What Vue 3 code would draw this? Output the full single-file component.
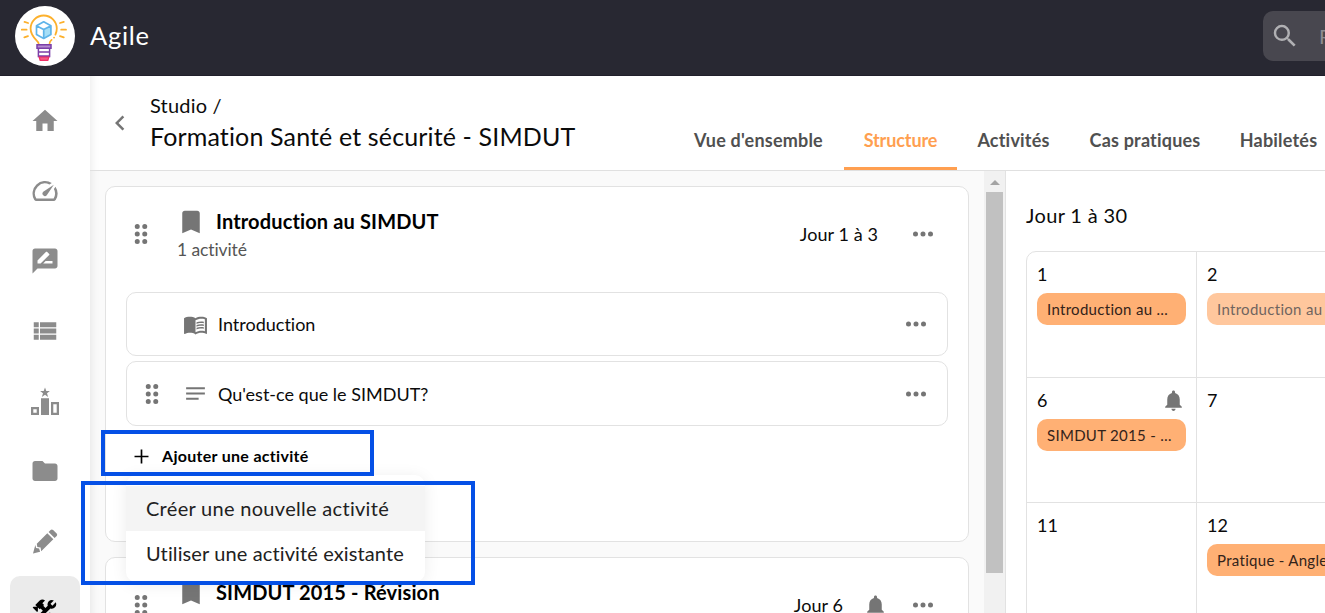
<template>
  <div class="app">
    <header class="topbar">
      <div class="brand">
        <svg class="logo" viewBox="0 0 60 60">
          <circle cx="30" cy="30" r="30" fill="#fff" />
          <g fill="none" stroke="#fcb02c" stroke-width="1.8" stroke-linecap="round">
            <path d="M23.6 37.5C23.6 34.8 15.6 31.5 15.6 22.6A13.1 13.1 0 0 1 41.8 22.6C41.8 25 41.2 27 40.4 28.6" />
            <path d="M34.6 37.2C34.7 35.6 35.4 34.9 36.6 33.9M39 31.6h.1" />
            <path d="M6.8 23.7h4.8M9.5 15.9l3.6 1.1M9.3 31.3l3.7-1.2M46.2 23.7H51M45 17l3.8-1.2M45 30.1l3.8 1.2" />
          </g>
          <path d="M28.7 24v8.5l7.4-4V20z" fill="#a5def7" />
          <path
            d="M28.7 15.8l7.2 3.9v8.7l-7.2 4-7.2-4v-8.7zM21.8 19.9l6.9 3.7 6.9-3.7M28.7 23.6v8.2"
            fill="none"
            stroke="#5fb4e9"
            stroke-width="1.7"
            stroke-linejoin="round"
          />
          <path d="M22 38.8h14v3.4H22z" fill="#b58bd0" stroke="#7b3fa8" stroke-width="1.5" />
          <path d="M23.4 42.5v8h11.2v-8M23.4 46h11.2M23.4 50h11.2" fill="none" stroke="#7b3fa8" stroke-width="1.5" />
          <path d="M24.2 51.2h9.6l-1 3.2h-7.6z" fill="#f55a85" stroke="#ef2f66" stroke-width="1.3" />
        </svg>
        <span class="brand-name">Agile</span>
      </div>
      <div class="search">
        <svg class="icon" viewBox="0 0 24 24"><path :d="icons.search" /></svg>
        <span>Rechercher</span>
      </div>
    </header>

    <div class="body">
      <nav class="sidebar">
        <a v-for="item in navItems" :key="item.name" class="nav-item" :class="{ active: item.active }">
          <svg class="icon" :viewBox="item.box || '0 0 24 24'"><path :d="item.path" /></svg>
        </a>
      </nav>

      <main class="main">
        <div class="page-header">
          <svg class="icon back" viewBox="0 0 24 24"><path :d="icons.chevron" /></svg>
          <div class="titles">
            <div class="crumb">Studio /</div>
            <h1>Formation Santé et sécurité - SIMDUT</h1>
          </div>
          <div class="tabs">
            <div
              v-for="tab in tabs"
              :key="tab.label"
              class="tab"
              :class="{ selected: tab.label === currentTab }"
              :style="{ width: tab.width + 'px' }"
            >
              {{ tab.label }}
            </div>
          </div>
        </div>

        <div class="content">
          <section class="modules">
            <article v-for="mod in modules" :key="mod.title" class="card">
              <div class="card-head">
                <svg class="icon" viewBox="0 0 24 24"><path :d="icons.drag" /></svg>
                <div class="card-title">
                  <div class="title-line">
                    <svg class="icon" viewBox="0 0 24 24"><path :d="icons.bookmark" /></svg>
                    <h2>{{ mod.title }}</h2>
                  </div>
                  <div class="count">{{ mod.count }}</div>
                </div>
                <span class="days">{{ mod.days }}</span>
                <svg v-if="mod.bell" class="icon small bell" viewBox="0 0 24 24"><path :d="icons.bell" /></svg>
                <svg class="icon more" viewBox="0 0 24 24"><path :d="icons.more" /></svg>
              </div>
              <div v-for="act in mod.activities" :key="act.label" class="activity">
                <svg class="icon" viewBox="0 0 24 24"><path v-if="act.draggable" :d="icons.drag" /></svg>
                <svg class="icon small kind" viewBox="0 0 24 24"><path :d="icons[act.icon]" /></svg>
                <span class="activity-label">{{ act.label }}</span>
                <svg class="icon more" viewBox="0 0 24 24"><path :d="icons.more" /></svg>
              </div>
              <div v-if="mod.activities.length" class="add">
                <svg class="icon small" viewBox="0 0 24 24"><path :d="icons.plus" /></svg>
                <span class="add-label">Ajouter une activité</span>
                <div v-if="menuOpen" class="menu">
                  <div
                    v-for="(option, i) in menuOptions"
                    :key="option"
                    class="option"
                    :class="{ hover: i === 0 }"
                  >
                    {{ option }}
                  </div>
                </div>
              </div>
            </article>
          </section>

          <div class="scrollbar">
            <div class="arrow"></div>
            <div class="thumb"></div>
          </div>

          <section class="calendar">
            <h3>Jour 1 à 30</h3>
            <div class="grid">
              <div v-for="day in days" :key="day.n" class="cell">
                <div class="cell-head">
                  <span>{{ day.n }}</span>
                  <svg v-if="day.bell" class="icon small" viewBox="0 0 24 24"><path :d="icons.bell" /></svg>
                </div>
                <div v-if="day.event" class="event" :class="{ faded: day.faded }">{{ day.event }}</div>
              </div>
            </div>
          </section>
        </div>
      </main>
    </div>

    <!-- highlight frames laid over the page -->
    <div class="frame frame-add"></div>
    <div class="frame frame-menu"></div>
  </div>
</template>

<script setup>
import { ref } from "vue";

const icons = {
  search:
    "M15.5 14h-.79l-.28-.27A6.471 6.471 0 0 0 16 9.5 6.5 6.5 0 1 0 9.5 16c1.61 0 3.09-.59 4.23-1.57l.27.28v.79l5 4.99L20.49 19l-4.99-5zm-6 0C7.01 14 5 11.99 5 9.5S7.01 5 9.5 5 14 7.01 14 9.5 11.99 14 9.5 14z",
  chevron: "M15.41 7.41L14 6l-6 6 6 6 1.41-1.41L10.83 12z",
  drag: "M7 6a2 2 0 1 0 4 0a2 2 0 1 0-4 0M13 6a2 2 0 1 0 4 0a2 2 0 1 0-4 0M7 12a2 2 0 1 0 4 0a2 2 0 1 0-4 0M13 12a2 2 0 1 0 4 0a2 2 0 1 0-4 0M7 18a2 2 0 1 0 4 0a2 2 0 1 0-4 0M13 18a2 2 0 1 0 4 0a2 2 0 1 0-4 0",
  bookmark: "M17 3H7c-1.1 0-2 .9-2 2v16l7-3 7 3V5c0-1.1-.9-2-2-2z",
  more: "M4 12a2 2 0 1 0 4 0a2 2 0 1 0-4 0M10 12a2 2 0 1 0 4 0a2 2 0 1 0-4 0M16 12a2 2 0 1 0 4 0a2 2 0 1 0-4 0",
  bell: "M12 22c1.1 0 2-.9 2-2h-4c0 1.1.89 2 2 2zm6-6v-5c0-3.07-1.64-5.64-4.5-6.32V4c0-.83-.67-1.5-1.5-1.5s-1.5.67-1.5 1.5v.68C7.63 5.36 6 7.92 6 11v5l-2 2v1h16v-1l-2-2z",
  book: "M21 5c-1.11-.35-2.33-.5-3.5-.5-1.95 0-4.05.4-5.5 1.5-1.45-1.1-3.55-1.5-5.5-1.5S2.45 4.9 1 6v14.65c0 .25.25.5.5.5.1 0 .15-.05.25-.05C3.1 20.45 5.05 20 6.5 20c1.95 0 4.05.4 5.5 1.5 1.35-.85 3.8-1.5 5.5-1.5 1.65 0 3.35.3 4.75 1.05.1.05.15.05.25.05.25 0 .5-.25.5-.5V6c-.6-.45-1.25-.75-2-1zm0 13.5c-1.1-.35-2.3-.5-3.5-.5-1.7 0-4.15.65-5.5 1.5V8c1.35-.85 3.8-1.5 5.5-1.5 1.2 0 2.4.15 3.5.5v11.5z M17.5 10.5c.88 0 1.73.09 2.5.26V9.24c-.79-.15-1.64-.24-2.5-.24-1.7 0-3.24.29-4.5.83v1.66c1.13-.64 2.7-.99 4.5-.99zM13 12.49v1.66c1.13-.64 2.7-.99 4.5-.99.88 0 1.73.09 2.5.26V11.9c-.79-.15-1.64-.24-2.5-.24-1.7 0-3.24.3-4.5.83zm4.5 1.84c-1.7 0-3.24.29-4.5.83v1.66c1.13-.64 2.7-.99 4.5-.99.88 0 1.73.09 2.5.26v-1.52c-.79-.16-1.64-.24-2.5-.24z",
  notes: "M21 11H3v2h18zM3 16h12v2H3zM21 6H3v2h18z",
  plus: "M18.7 12.8h-5.9v5.9h-1.6v-5.9H5.3v-1.6h5.9V5.3h1.6v5.9h5.9z",
};

const navItems = [
  { name: "home", path: "M10 20v-6h4v6h5v-8h3L12 3 2 12h3v8z" },
  {
    name: "dashboard",
    path: "M20.38 8.57l-1.23 1.85a8 8 0 0 1-.22 7.58H5.07A8 8 0 0 1 15.58 6.85l1.85-1.23A10 10 0 0 0 3.35 19a2 2 0 0 0 1.72 1h13.85a2 2 0 0 0 1.74-1 10 10 0 0 0-.27-10.44zM10.59 15.41a2 2 0 0 0 2.83 0l5.66-8.49-8.49 5.66a2 2 0 0 0 0 2.83z",
  },
  {
    name: "review",
    path: "M20 2H4c-1.1 0-1.99.9-1.99 2L2 22l4-4h14c1.1 0 2-.9 2-2V4c0-1.1-.9-2-2-2zM6 14v-2.47l6.88-6.88c.2-.2.51-.2.71 0l1.77 1.77c.2.2.2.51 0 .71L8.47 14H6zm12 0h-7.5l2-2H18v2z",
  },
  {
    name: "list",
    path: "M3 14h4v-4H3v4zm0 5h4v-4H3v4zM3 9h4V5H3v4zm5 5h13v-4H8v4zm0 5h13v-4H8v4zM8 5v4h13V5H8z",
  },
  {
    name: "ranking",
    box: "0 0 30 30",
    path: "M15 1.5l1.3 3.6h3.6l-2.9 2.2 1.1 3.6-3.1-2.1-3.1 2.1 1.1-3.6-2.9-2.2h3.6zM11 12.3h8V29h-8zM1 21v8h8v-8zM3.3 23.3h3.4v3.4H3.3v-3.4zM21 16v13h8V16zM23.3 18.3h3.4v8.4h-3.4v-8.4z",
  },
  {
    name: "folder",
    path: "M10 4H4c-1.1 0-1.99.9-1.99 2L2 18c0 1.1.9 2 2 2h16c1.1 0 2-.9 2-2V8c0-1.1-.9-2-2-2h-8l-2-2z",
  },
  {
    name: "edit",
    box: "0 0 30 30",
    path: "M17.3 7.3l6 6-12.1 11.9-.6-3.8-3.3-.5-.5-3.1zM5.3 19l.8 3 3 .6 1 3.1-7.1 1.8zM18.6 6l2-2q1.2-1.1 2.5 0l3.6 3.6q1 1.2 0 2.3L24.6 12z",
  },
  {
    name: "tools",
    active: true,
    path: "M13.78 15.3L19.78 21.3L21.89 19.14L15.89 13.14L13.78 15.3M17.5 10.1C17.11 10.1 16.69 10.05 16.36 9.91L4.97 21.25L2.86 19.14L10.27 11.74L8.5 9.96L7.78 10.66L6.33 9.25V12.11L5.63 12.81L2.11 9.25L2.81 8.55H5.62L4.22 7.14L7.78 3.58C8.95 2.41 10.83 2.41 12 3.58L9.89 5.74L11.3 7.14L10.59 7.85L12.38 9.63L14.2 7.75C14.06 7.42 14 7 14 6.63C14 4.66 15.56 3.11 17.5 3.11C18.09 3.11 18.61 3.25 19.08 3.53L16.41 6.2L17.91 7.7L20.58 5.03C20.86 5.5 21 6 21 6.63C21 8.55 19.45 10.1 17.5 10.1Z",
  },
];

const tabs = [
  { label: "Vue d'ensemble", width: 171 },
  { label: "Structure", width: 113 },
  { label: "Activités", width: 113 },
  { label: "Cas pratiques", width: 150 },
  { label: "Habiletés", width: 117 },
];
const currentTab = ref("Structure");

const modules = [
  {
    title: "Introduction au SIMDUT",
    count: "1 activité",
    days: "Jour 1 à 3",
    activities: [
      { label: "Introduction", icon: "book", draggable: false },
      { label: "Qu'est-ce que le SIMDUT?", icon: "notes", draggable: true },
    ],
  },
  {
    title: "SIMDUT 2015 - Révision",
    count: "",
    days: "Jour 6",
    bell: true,
    activities: [],
  },
];

const menuOpen = ref(true);
const menuOptions = ["Créer une nouvelle activité", "Utiliser une activité existante"];

const days = [
  { n: 1, event: "Introduction au SIMDUT" },
  { n: 2, event: "Introduction au SIMDUT", faded: true },
  { n: 6, event: "SIMDUT 2015 - Révision", bell: true },
  { n: 7 },
  { n: 11 },
  { n: 12, event: "Pratique - Angles morts" },
];
</script>

<style>
body {
  margin: 0;
  overflow: hidden;
}
</style>

<style scoped>
.app {
  position: relative;
  width: 100vw;
  height: 100vh;
  overflow: hidden;
  display: flex;
  flex-direction: column;
  font-family: Lato, "Open Sans", sans-serif;
  font-variant-ligatures: none;
  color: #0b0b0b;
  background: #fff;
}
h1,
h2,
h3 {
  margin: 0;
  font-weight: 400;
}
.icon {
  width: 30px;
  height: 30px;
  flex: none;
  display: block;
  fill: #757575;
}
.icon.small {
  width: 25px;
  height: 25px;
}

/* top bar */
.topbar {
  flex: none;
  height: 76px;
  box-sizing: border-box;
  padding: 0 0 4px 15px;
  display: flex;
  align-items: center;
  justify-content: space-between;
  background: #282832;
  border-bottom: 1px solid #201f2b;
}
.brand {
  display: flex;
  align-items: center;
  gap: 15px;
}
.logo {
  width: 60px;
  height: 60px;
}
.brand-name {
  padding-bottom: 2px;
  color: #fff;
  font-size: 25.5px;
  letter-spacing: 0.7px;
}
.search {
  width: 62px;
  height: 50px;
  box-sizing: border-box;
  padding-left: 7px;
  display: flex;
  align-items: center;
  gap: 19px;
  overflow: hidden;
  border-radius: 10px 0 0 10px;
  background: #48474f;
  color: #8d8c92;
  font-size: 20px;
}
.search .icon {
  fill: #b0b0b3;
}

/* sidebar */
.body {
  flex: 1;
  min-height: 0;
  display: flex;
}
.sidebar {
  flex: none;
  width: 90px;
  box-sizing: border-box;
  padding: 10px;
  overflow: hidden;
}
.nav-item {
  height: 70px;
  display: flex;
  align-items: center;
  justify-content: center;
  border-radius: 10px;
}
.nav-item .icon {
  fill: #8c8c8c;
}
.nav-item.active {
  background: #ebebeb;
}
.nav-item.active .icon {
  fill: #000;
}

/* page header */
.main {
  flex: 1;
  min-width: 0;
  display: flex;
  flex-direction: column;
  box-shadow: inset 11px 0 10px -10px rgba(0, 0, 0, 0.09);
}
.page-header {
  flex: none;
  height: 95px;
  box-sizing: border-box;
  padding-left: 15px;
  display: flex;
  border-bottom: 1px solid #e0e0e0;
}
.back {
  margin-top: 32px;
}
.titles {
  width: 523px;
  flex: none;
  margin: 15px 0 0 15px;
}
.crumb {
  font-size: 20px;
  line-height: 28px;
  letter-spacing: 0.2px;
}
h1 {
  font-size: 25px;
  line-height: 35px;
  letter-spacing: 0.14px;
  white-space: nowrap;
}
.tabs {
  display: flex;
  align-items: flex-end;
}
.tab {
  flex: none;
  height: 60px;
  box-sizing: border-box;
  line-height: 60px;
  text-align: center;
  font-size: 18px;
  font-weight: 700;
  letter-spacing: 0.2px;
  color: #505050;
  white-space: nowrap;
}
.tab.selected {
  letter-spacing: -0.1px;
  color: #ff9f50;
  border-bottom: 3px solid #ff9f50;
}

/* modules */
.content {
  flex: 1;
  min-height: 0;
  display: flex;
}
.modules {
  width: 894px;
  flex: none;
  box-sizing: border-box;
  padding: 15px 15px 0;
  overflow: hidden;
  background: rgba(0, 0, 0, 0.02);
}
.card {
  height: 356px;
  box-sizing: border-box;
  margin-bottom: 15px;
  padding: 0 20px;
  border: 1px solid #e2e2e2;
  border-radius: 10px;
  background: #fff;
}
.card-head {
  height: 94px;
  margin-bottom: 11px;
  display: flex;
  align-items: center;
}
.card-title {
  margin-left: 20px;
  height: 52px;
  flex: 1;
}
.title-line {
  display: flex;
  align-items: center;
  gap: 10px;
  height: 28px;
}
h2 {
  padding-bottom: 2px;
  font-size: 20px;
  font-weight: 700;
  letter-spacing: 0.14px;
  color: #000;
}
.count {
  padding-left: 1px;
  font-size: 17.5px;
  line-height: 28px;
  letter-spacing: -0.1px;
  color: #555;
}
.days {
  font-size: 18px;
  letter-spacing: 0.08px;
}
.bell {
  margin-left: 20px;
}
.card-head .more {
  margin: 0 10px 0 30px;
}
.card-head .bell + .more {
  margin-left: 20px;
}
.activity {
  height: 64px;
  box-sizing: border-box;
  margin-bottom: 5px;
  padding: 0 16px 0 10px;
  display: flex;
  align-items: center;
  border: 1px solid #e2e2e2;
  border-radius: 10px;
}
.activity + .activity {
  height: 65px;
  margin-bottom: 0;
}
.kind {
  margin-left: 16px;
}
.activity-label {
  flex: 1;
  margin-left: 10px;
  font-size: 18px;
}

/* add button and its menu */
.add {
  position: relative;
  height: 60px;
  padding-left: 3px;
  display: flex;
  align-items: center;
  gap: 8px;
  font-size: 16px;
  font-weight: 700;
  letter-spacing: 0.3px;
  color: #000;
}
.add-label {
  padding-bottom: 2px;
}
.add .icon {
  fill: #000;
}
.menu {
  position: absolute;
  z-index: 2;
  left: 0;
  top: 49px;
  width: 299px;
  height: 107px;
  box-sizing: border-box;
  padding-top: 11px;
  border-radius: 10px;
  background: #fff;
  box-shadow: 0 2px 16px rgba(0, 0, 0, 0.08);
}
.option {
  height: 45px;
  box-sizing: border-box;
  padding: 0 0 1px 20px;
  display: flex;
  align-items: center;
  font-size: 20px;
  font-weight: 400;
  letter-spacing: 0.12px;
  color: #212121;
  white-space: nowrap;
}
.option.hover {
  letter-spacing: 0.3px;
  background: #f4f4f4;
}

/* fixed scrollbar */
.scrollbar {
  flex: none;
  width: 21px;
  display: flex;
  flex-direction: column;
  align-items: center;
  background: #f1f1f1;
}
.arrow {
  margin: 9px 0 7px;
  border: 5px solid transparent;
  border-top: none;
  border-bottom-color: #a3a3a3;
}
.thumb {
  width: 17px;
  height: 381px;
  background: #c1c1c1;
}

/* calendar */
.calendar {
  flex: 1;
  min-width: 0;
  overflow: hidden;
  padding-left: 20px;
  border-left: 1px solid #e2e2e2;
}
h3 {
  height: 80px;
  line-height: 88px;
  font-size: 20px;
  letter-spacing: 0.35px;
}
.grid {
  width: 341px;
  box-sizing: border-box;
  display: grid;
  grid-template-columns: 170px 170px;
  grid-template-rows: 126px 125px 125px;
  border: 1px solid #e2e2e2;
  border-radius: 10px 0 0 0;
}
.cell {
  min-width: 0;
  padding: 9px 10px 0;
  border-right: 1px solid #e2e2e2;
  border-bottom: 1px solid #e2e2e2;
}
.cell-head {
  height: 26px;
  padding-bottom: 6px;
  display: flex;
  align-items: center;
  justify-content: space-between;
  font-size: 18px;
}
.event {
  height: 32px;
  padding: 0 10px;
  overflow: hidden;
  text-overflow: ellipsis;
  white-space: nowrap;
  border-radius: 10px;
  background: #ffb074;
  font-size: 15px;
  line-height: 32px;
  letter-spacing: 0.3px;
  color: #33231a;
}
.event.faded {
  opacity: 0.7;
}

/* highlight frames */
.frame {
  position: absolute;
  z-index: 5;
  box-sizing: border-box;
  border: 4px solid #0550e6;
}
.frame-add {
  left: 101px;
  top: 430px;
  width: 273px;
  height: 46px;
}
.frame-menu {
  left: 81px;
  top: 481px;
  width: 394px;
  height: 104px;
}
</style>
